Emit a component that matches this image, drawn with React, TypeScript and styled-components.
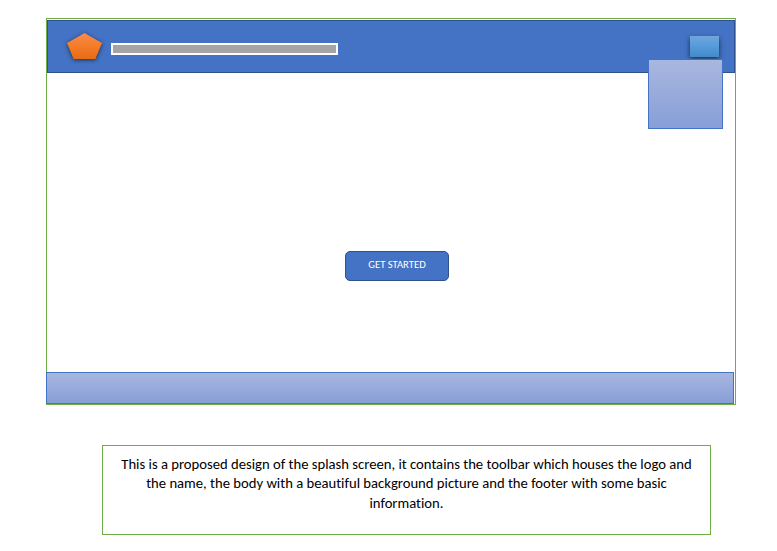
import React from "react";
import styled, { createGlobalStyle } from "styled-components";

const GlobalStyle = createGlobalStyle`
  * { box-sizing: border-box; }
  body { margin: 0; background: #fff; font-family: Carlito, Lato, sans-serif; }
`;

const Page = styled.main`
  display: flex;
  flex-direction: column;
  width: 777px;
  height: 551px;
  padding: 18px 0 0 46px;
  overflow: hidden;
`;

const Screen = styled.section`
  display: flex;
  flex-direction: column;
  width: 690px;
  height: 387px;
  border: 1px solid #70ad47;
  padding-top: 1px;
`;

const Toolbar = styled.header`
  position: relative;
  display: flex;
  align-items: flex-start;
  flex: none;
  height: 53px;
  padding: 12px 15px 0 19px;
  background: #4472c4;
  border: 1px solid #2f528f;
`;

const Logo = styled.svg`
  display: block;
  flex: none;
  width: 35px;
  height: 26px;
  overflow: visible;
  filter: drop-shadow(0 1.5px 2px rgba(0, 0, 0, 0.6));
`;

const NameBar = styled.div`
  width: 227px;
  height: 12px;
  margin: 10px 0 0 9px;
  background: #a5a5a5;
  border: 2px solid #fff;
`;

const MenuButton = styled.div`
  width: 29px;
  height: 21px;
  margin: 3px 0 0 auto;
  background: linear-gradient(#71a6db, #559bdb 50%, #438ac9);
  box-shadow: 0 1.5px 5px rgba(0, 0, 0, 0.63);
`;

const MenuPanel = styled.div`
  position: absolute;
  top: 38px;
  right: 11px;
  width: 75px;
  height: 70px;
  background: linear-gradient(#a8b7df, #879ed7);
  border: 1px solid #4472c4;
`;

const Body = styled.div`
  flex: 1;
  display: flex;
  justify-content: center;
  align-items: flex-start;
  padding: 178px 0 0 12px;
`;

const StartButton = styled.button`
  width: 104px;
  height: 30px;
  padding: 0 0 3px;
  color: #fff;
  background: #4472c4;
  border: 1px solid #2f528f;
  border-radius: 5px;
  font: 10.67px/20px Carlito, Lato, sans-serif;
`;

const Footer = styled.footer`
  flex: none;
  width: 688px;
  height: 32px;
  margin-left: -1px;
  background: linear-gradient(#a8b7df, #879ed7);
  border: 1px solid #4472c4;
`;

const Caption = styled.p`
  width: 609px;
  height: 90px;
  margin: 40px 0 0 56px;
  padding: 9px 0 0;
  border: 1px solid #70ad47;
  color: #000;
  text-align: center;
  font-size: 14.67px;
  line-height: 19.4px;
  font-variant-ligatures: none;
`;

const Line = styled.span`
  display: block;
  white-space: nowrap;
`;

export default function App() {
  return (
    <>
      <GlobalStyle />
      <Page>
        <Screen>
          <Toolbar>
            <Logo viewBox="0 0 35 26">
              <defs>
                <linearGradient id="logoFill" x1="0" y1="0" x2="0" y2="1">
                  <stop offset="0" stopColor="#f68c50" />
                  <stop offset="0.5" stopColor="#f57c28" />
                  <stop offset="1" stopColor="#e66c17" />
                </linearGradient>
              </defs>
              <path d="M17.5 0 35 10 28.4 26H6.6L0 10Z" fill="url(#logoFill)" />
            </Logo>
            <NameBar />
            <MenuButton />
            <MenuPanel />
          </Toolbar>
          <Body>
            <StartButton>GET STARTED</StartButton>
          </Body>
          <Footer />
        </Screen>
        <Caption>
          <Line>This is a proposed design of the splash screen, it contains the toolbar which houses the logo and</Line>
          <Line>the name, the body with a beautiful background picture and the footer with some basic</Line>
          <Line>information.</Line>
        </Caption>
      </Page>
    </>
  );
}
